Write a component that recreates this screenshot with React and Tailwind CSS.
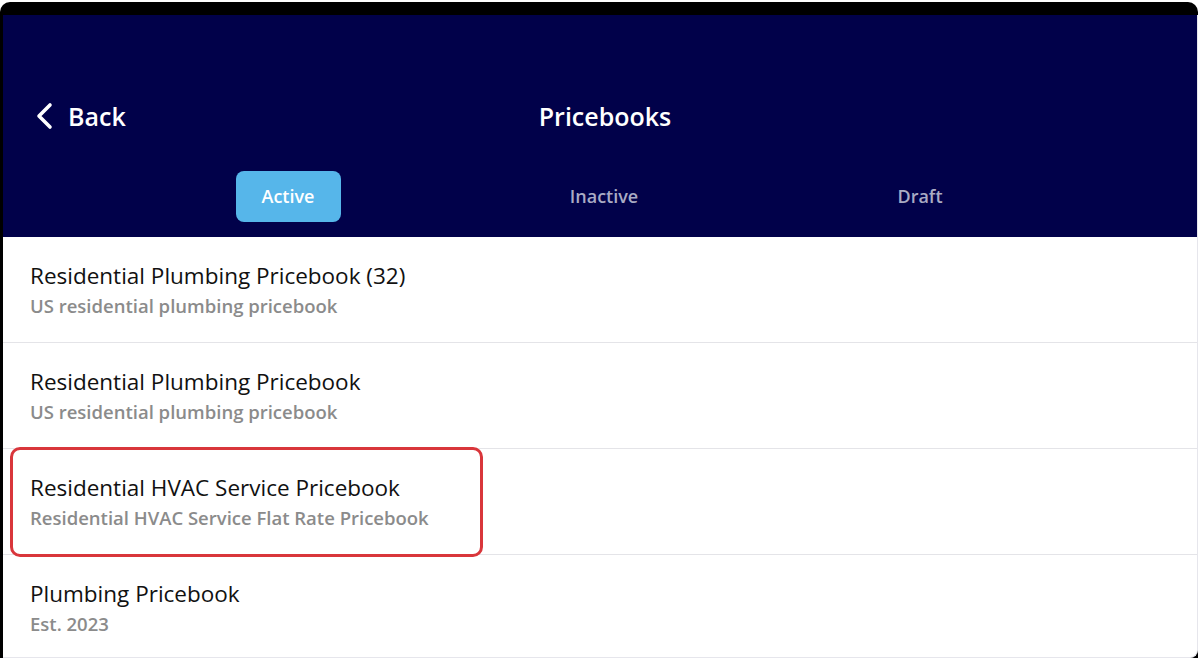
import React from 'react';

const books = [
  { name: 'Residential Plumbing Pricebook (32)', desc: 'US residential plumbing pricebook' },
  { name: 'Residential Plumbing Pricebook', desc: 'US residential plumbing pricebook' },
  { name: 'Residential HVAC Service Pricebook', desc: 'Residential HVAC Service Flat Rate Pricebook', marked: true },
  { name: 'Plumbing Pricebook', desc: 'Est. 2023' },
];

const tabs = ['Active', 'Inactive', 'Draft'];

export default function App() {
  return (
    <div className="w-[1200px] h-[659px] bg-white pt-[2px] overflow-hidden" style={{ fontFamily: '"Open Sans", "Noto Sans", sans-serif' }}>
      <div className="h-[656px] w-[1198px] bg-black rounded-t-[10px] pt-[13px] pl-[3px]">
        <div className="h-full bg-white border-r border-b border-[#e6e6ec] rounded-br-[8px] overflow-hidden flex flex-col">
          {/* header */}
          <div className="bg-[#01014a] h-[222px] shrink-0 flex flex-col">
            <div className="relative h-[156px] pt-[88px]">
              <div className="flex items-center gap-[13px] pl-[32px] text-white h-[26px]">
                <svg width="20" height="28" viewBox="0 0 20 28" fill="none" stroke="white" strokeWidth="3.6" strokeLinecap="round" strokeLinejoin="round">
                  <path d="M15 3 L4 14 L15 25" />
                </svg>
                <span className="text-[25px] font-semibold leading-[26px]">Back</span>
              </div>
              <div className="absolute left-0 right-0 top-[88px] text-center text-white text-[25px] font-semibold leading-[26px] pl-[10px]">
                Pricebooks
              </div>
            </div>
            <div className="flex pl-[127px]">
              {tabs.map((t, i) => (
                <div key={t} className="w-[316px] flex justify-center">
                  <div className={`h-[51px] w-[105px] rounded-[8px] flex items-center justify-center text-[18px] font-semibold ${i === 0 ? 'bg-[#56b6ea] text-white' : 'text-[#a9abc4]'}`}>
                    {t}
                  </div>
                </div>
              ))}
            </div>
          </div>
          {/* list */}
          <div className="flex-1">
            {books.map((b, i) => (
              <div key={i} className={`relative h-[106px] pl-[27px] pt-[23px] ${i < books.length - 1 ? 'border-b border-[#e4e4e8]' : ''}`}>
                <div className="text-[22.5px] text-[#111] leading-[31px]">{b.name}</div>
                <div className="text-[18.5px] font-semibold text-[#8b8b8b] leading-[30px]">{b.desc}</div>
                {b.marked && (
                  <div className="absolute left-[7px] top-[-2px] w-[473px] h-[110px] border-[3px] border-[#d9363b] rounded-[10px]" />
                )}
              </div>
            ))}
          </div>
        </div>
      </div>
    </div>
  );
}
